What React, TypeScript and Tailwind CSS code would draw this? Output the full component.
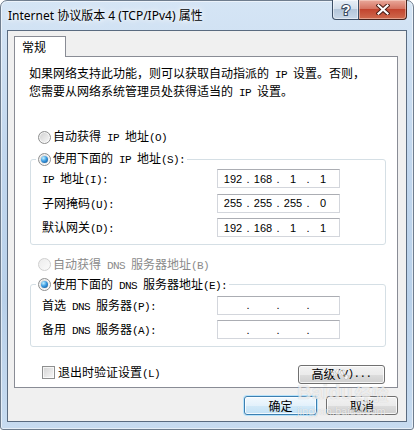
import React from 'react'

// half-width runs are drawn narrower, like the bitmap dialog font
function Txt({ t }: { t: string }) {
  const parts = t.split(/([\x20-\x7e]+)/)
  return (
    <>
      {parts.map((p, i) =>
        i % 2 === 1 ? (
          <span key={i} className="whitespace-pre font-['Liberation_Mono',monospace] text-[11px] tracking-[-0.6px]">
            {p}
          </span>
        ) : (
          <span key={i}>{p}</span>
        )
      )}
    </>
  )
}

function Radio({ checked, disabled }: { checked?: boolean; disabled?: boolean }) {
  return (
    <span
      className={`flex h-[13px] w-[13px] shrink-0 items-center justify-center rounded-full border ${
        disabled
          ? 'border-[#cfcfcf] bg-[linear-gradient(135deg,#ececec,#fbfbfb)]'
          : 'border-[#8e8f8f] bg-[linear-gradient(135deg,#cfcfcf,#f9f9f9)] shadow-[inset_0_0_0_1px_rgba(255,255,255,0.7)]'
      }`}
    >
      {checked && (
        <span className="h-[7px] w-[7px] rounded-full bg-[radial-gradient(circle_at_35%_30%,#c4f2ff_0%,#3b9be2_45%,#0c4a86_100%)]" />
      )}
    </span>
  )
}

function RadioRow({ label, checked, disabled }: { label: string; checked?: boolean; disabled?: boolean }) {
  return (
    <div className={`flex h-[16px] items-center gap-[2px] ${disabled ? 'text-[#8a8a8a]' : 'text-black'}`}>
      <Radio checked={checked} disabled={disabled} />
      <span className="whitespace-nowrap">
        <Txt t={label} />
      </span>
    </div>
  )
}

function IpField({ parts }: { parts?: string[] }) {
  const p = parts ?? ['', '', '', '']
  return (
    <div className="flex h-[19px] w-[123px] items-center border border-[#d3d6dc] border-t-[#abadb3] bg-white pl-[2px] font-['Liberation_Sans',sans-serif] text-[11px] text-black">
      {p.map((v, i) => (
        <React.Fragment key={i}>
          <span className="w-[26px] text-center">{v}</span>
          {i < 3 && <span className="w-[4px] text-center">.</span>}
        </React.Fragment>
      ))}
    </div>
  )
}

function FieldRow({ label, parts }: { label: string; parts?: string[] }) {
  return (
    <div className="flex items-center pl-[11px]">
      <span className="w-[175px] whitespace-nowrap">
        <Txt t={label} />
      </span>
      <IpField parts={parts} />
    </div>
  )
}

function Button({ children, primary, className }: { children: React.ReactNode; primary?: boolean; className?: string }) {
  return (
    <button
      className={`flex h-[19px] items-center justify-center rounded-[3px] border text-black ${
        primary
          ? 'border-[#3c7fb1] bg-[linear-gradient(180deg,#f2f9fe_0%,#e3f1fb_50%,#d2e9f8_51%,#c3e1f5_100%)] shadow-[0_0_0_1px_#b8e3fb,inset_0_0_0_1px_rgba(255,255,255,0.8)]'
          : 'border-[#707070] bg-[linear-gradient(180deg,#f2f2f2_0%,#ebebeb_50%,#dddddd_51%,#cfcfcf_100%)] shadow-[inset_0_0_0_1px_rgba(255,255,255,0.8)]'
      } ${className ?? ''}`}
    >
      {children}
    </button>
  )
}

export default function App() {
  return (
    <div className="h-[430px] w-[414px] bg-white">
      <div className="relative flex h-[430px] w-[414px] flex-col rounded-t-[7px] rounded-b-[3px] border border-[#6f7d8e] bg-[linear-gradient(180deg,#d5e5f5_0%,#c2d7ee_35%,#b9d1ea_70%,#c7dbf0_100%)] px-[6px] shadow-[inset_0_0_0_1px_rgba(255,255,255,0.55)]">
        {/* Title bar */}
        <div className="flex h-[29px] items-start justify-between">
          <div className="pl-[1px] pt-[7px] font-['Noto_Sans','Noto_Sans_CJK_SC',sans-serif] text-[12px] leading-[16px] text-black [text-shadow:0_0_8px_#fff,0_0_4px_#fff]">
            Internet 协议版本 4 (TCP/IPv4) 属性
          </div>
          <div className="-mt-px flex">
            <div className="flex h-[20px] w-[27px] items-center justify-center rounded-bl-[4px] border border-t-0 border-[#3d4f66] bg-[linear-gradient(180deg,#e8eff7_0%,#d3dfec_45%,#b4c6da_50%,#c9d8e8_100%)] shadow-[inset_0_0_0_1px_rgba(255,255,255,0.5)]">
              <svg width="12" height="15" viewBox="0 0 12 15">
                <text x="6" y="13" textAnchor="middle" fontFamily="Liberation Sans, sans-serif" fontWeight="bold" fontSize="14" fill="#fff" stroke="#3b4c62" strokeWidth="2.2" paintOrder="stroke">
                  ?
                </text>
              </svg>
            </div>
            <div className="flex h-[20px] w-[48px] items-center justify-center rounded-br-[4px] border border-l-0 border-t-0 border-[#47231d] bg-[linear-gradient(180deg,#e9a99b_0%,#d67462_45%,#c2452f_50%,#cf6a4e_100%)] shadow-[inset_0_0_0_1px_rgba(255,230,220,0.45)]">
              <svg width="14" height="11" viewBox="0 0 14 11">
                <path d="M2.5 1.5 L11.5 9.5 M11.5 1.5 L2.5 9.5" stroke="#4a1d15" strokeWidth="4.2" strokeLinecap="square" />
                <path d="M2.5 1.5 L11.5 9.5 M11.5 1.5 L2.5 9.5" stroke="#ffffff" strokeWidth="2.2" strokeLinecap="square" />
              </svg>
            </div>
          </div>
        </div>

        {/* Client area */}
        <div className="flex h-[392px] flex-col border border-[#5a6b80] bg-[#f0f0f0] pl-[6px] pr-[8px] pt-[5px] font-['Noto_Sans_CJK_SC',sans-serif] text-[12px] text-black">
          <div className="flex">
            <div className="relative z-10 -mb-px flex h-[21px] w-[52px] items-center border border-b-0 border-[#898c95] bg-white pl-[7px] leading-none">
              常规
            </div>
          </div>
          <div className="flex h-[332px] flex-col border border-[#898c95] bg-white">
            <p className="pl-[14px] pt-[8px] leading-[15px] whitespace-nowrap">
              <Txt t="如果网络支持此功能，则可以获取自动指派的 IP 设置。否则，" />
              <br />
              <Txt t="您需要从网络系统管理员处获得适当的 IP 设置。" />
            </p>

            <div className="ml-[23px] mt-[28px]">
              <RadioRow label="自动获得 IP 地址(O)" />
            </div>

            <fieldset className="ml-[15px] mr-[11px] mt-[6px] flex flex-col gap-[5px] rounded-[3px] border border-[#d5dfe5] pb-[6px] pt-[2px]">
              <legend className="ml-[5px] px-[2px]">
                <RadioRow label="使用下面的 IP 地址(S):" checked />
              </legend>
              <FieldRow label="IP 地址(I):" parts={['192', '168', '1', '1']} />
              <FieldRow label="子网掩码(U):" parts={['255', '255', '255', '0']} />
              <FieldRow label="默认网关(D):" parts={['192', '168', '1', '1']} />
            </fieldset>

            <div className="ml-[23px] mt-[12px]">
              <RadioRow label="自动获得 DNS 服务器地址(B)" disabled />
            </div>

            <fieldset className="ml-[15px] mr-[11px] mt-[4px] flex flex-col gap-[5px] rounded-[3px] border border-[#d5dfe5] pb-[6px] pt-[3px]">
              <legend className="ml-[5px] px-[2px]">
                <RadioRow label="使用下面的 DNS 服务器地址(E):" checked />
              </legend>
              <FieldRow label="首选 DNS 服务器(P):" />
              <FieldRow label="备用 DNS 服务器(A):" />
            </fieldset>

            <div className="ml-[27px] mr-[12px] mt-[18px] flex items-start justify-between">
              <div className="mt-[1px] flex h-[14px] items-center gap-[3px]">
                <span className="h-[13px] w-[13px] border border-[#8e8f8f] bg-[linear-gradient(135deg,#d3d3d3,#f9f9f9)] shadow-[inset_0_0_0_1px_rgba(255,255,255,0.7)]" />
                <span className="whitespace-nowrap">
                  <Txt t="退出时验证设置(L)" />
                </span>
              </div>
              <Button className="w-[87px]">
                <Txt t="高级(V)..." />
              </Button>
            </div>
          </div>

          <div className="mt-[8px] flex justify-end gap-[9px]">
            <Button primary className="w-[73px]">
              确定
            </Button>
            <Button className="w-[72px]">取消</Button>
          </div>
        </div>
        <div className="h-[7px]" />

        {/* watermark */}
        <div className="pointer-events-none absolute left-[296px] top-[381px] flex flex-col items-start text-white/70 [text-shadow:0_0_1px_rgba(0,0,0,0.2)]">
          <div className="flex items-end font-['Liberation_Sans',sans-serif] text-[20px] font-bold leading-none">
            <span>Bai</span>
            <span className="relative">
              <svg className="absolute -top-[13px] left-[1px]" width="20" height="16" viewBox="0 0 22 18">
                <g fill="rgba(255,255,255,0.75)" stroke="rgba(0,0,0,0.15)" strokeWidth="0.8">
                  <ellipse cx="5" cy="5" rx="2.4" ry="3" />
                  <ellipse cx="10" cy="3" rx="2.4" ry="3" />
                  <ellipse cx="15.5" cy="4" rx="2.4" ry="3" />
                  <ellipse cx="19" cy="9" rx="2.2" ry="2.8" />
                </g>
              </svg>
              du
            </span>
            <span className="ml-[2px] font-['Noto_Sans_CJK_SC',sans-serif] text-[17px]">经验</span>
          </div>
          <div className="mt-[4px] font-['Liberation_Sans',sans-serif] text-[11px] leading-none">jingyan.baidu.com</div>
        </div>
      </div>
    </div>
  )
}
